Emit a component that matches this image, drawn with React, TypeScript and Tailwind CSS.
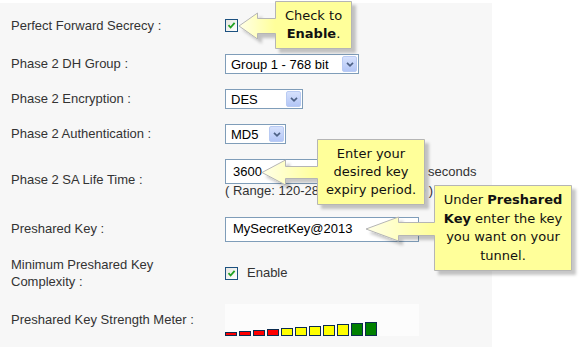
import type { ReactNode } from 'react'

const label = "font-['Liberation_Sans',Arial,sans-serif] text-[13px] text-[#333]"

const bars = [
  { h: 4, c: 'bg-[#ff0000]' },
  { h: 5, c: 'bg-[#ff0000]' },
  { h: 6, c: 'bg-[#ff0000]' },
  { h: 7, c: 'bg-[#ff0000]' },
  { h: 8, c: 'bg-[#ffff00]' },
  { h: 9, c: 'bg-[#ffff00]' },
  { h: 10, c: 'bg-[#ffff00]' },
  { h: 11, c: 'bg-[#ffff00]' },
  { h: 12, c: 'bg-[#ffff00]' },
  { h: 13, c: 'bg-[#008000]' },
  { h: 14, c: 'bg-[#008000]' },
]

function Row({ title, className, children }: { title: ReactNode; className: string; children: ReactNode }) {
  return (
    <div className={`flex items-center ${className}`}>
      <div className={`w-[225px] shrink-0 pl-[11px] ${label}`}>{title}</div>
      <div className="flex-1">{children}</div>
    </div>
  )
}

function Checkbox() {
  return (
    <span className="flex h-[13px] w-[13px] items-center justify-center border border-[#1c5180] bg-gradient-to-br from-[#e6e6e0] to-white">
      <svg width="9" height="9" viewBox="0 0 9 9">
        <path d="M1.5 4.2 L3.6 6.5 L7.6 1.8" stroke="#21a121" strokeWidth="1.8" fill="none" />
      </svg>
    </span>
  )
}

function Select({ value, width }: { value: string; width: string }) {
  return (
    <div className={`flex h-[20px] items-center justify-between border border-[#7f9db9] bg-white pl-[5px] pr-px ${width}`}>
      <span className="font-['Liberation_Sans',Arial,sans-serif] text-[13px] leading-none text-black">{value}</span>
      <span className="flex h-[16px] w-[15px] items-center justify-center rounded-[2px] border border-[#b9cbf3] bg-gradient-to-b from-[#d6e1fc] to-[#b3c6f6]">
        <svg width="8" height="5" viewBox="0 0 8 5">
          <path d="M1 0.8 L4 3.8 L7 0.8" stroke="#4d6185" strokeWidth="1.7" fill="none" />
        </svg>
      </span>
    </div>
  )
}

function TextBox({ value }: { value: string }) {
  return (
    <div className="flex h-[25px] w-[194px] items-center border border-[#7f9db9] bg-white pl-[7px] font-['Liberation_Sans',Arial,sans-serif] text-[13px] text-black">
      {value}
    </div>
  )
}

const tip = "absolute flex items-center justify-center text-center font-['DejaVu_Sans',Verdana,sans-serif] text-[13px] text-[#111]"

export default function App() {
  return (
    <div className="relative h-[347px] w-[580px] overflow-hidden bg-white">
      <div className="mt-[3px] h-[344px] w-[492px] bg-[#f7f7f7]">
        <Row title="Perfect Forward Secrecy :" className="h-[45px]">
          <Checkbox />
        </Row>
        <Row title="Phase 2 DH Group :" className="h-[32px]">
          <Select value="Group 1 - 768 bit" width="w-[134px]" />
        </Row>
        <Row title="Phase 2 Encryption :" className="h-[38px]">
          <Select value="DES" width="w-[78px]" />
        </Row>
        <Row title="Phase 2 Authentication :" className="h-[32px]">
          <Select value="MD5" width="w-[61px]" />
        </Row>
        <Row title={<span className="block pt-[3px]">Phase 2 SA Life Time :</span>} className="h-[56px]">
          <div className="flex items-center gap-[9px]">
            <TextBox value="3600" />
            <span className={label}>seconds</span>
          </div>
          <div className={`${label} leading-[13px]`}>( Range: 120-28800, Default: 3600 )</div>
        </Row>
        <Row title="Preshared Key :" className="h-[46px]">
          <TextBox value="MySecretKey@2013" />
        </Row>
        <Row
          title={
            <span className="block leading-[17px]">
              Minimum Preshared Key
              <br />
              Complexity :
            </span>
          }
          className="h-[42px]"
        >
          <div className="flex items-center gap-[9px]">
            <Checkbox />
            <span className={label}>Enable</span>
          </div>
        </Row>
        <Row title="Preshared Key Strength Meter :" className="h-[52px]">
          <div className="flex h-[32px] w-[194px] items-end gap-[2px] bg-[#fcfcfc]">
            {bars.map((b, i) => (
              <span key={i} className={`w-[12px] border border-[#0b2b4f] ${b.c}`} style={{ height: b.h }} />
            ))}
          </div>
        </Row>
      </div>

      <svg className="pointer-events-none absolute left-0 top-0" width="580" height="347" viewBox="0 0 580 347">
        <defs>
          <filter id="sh" x="-10%" y="-10%" width="130%" height="140%">
            <feDropShadow dx="4" dy="4" stdDeviation="1.8" floodColor="#000" floodOpacity="0.22" />
          </filter>
          <linearGradient id="g1" gradientUnits="userSpaceOnUse" x1="239" y1="0" x2="275" y2="0">
            <stop offset="0" stopColor="#ffffe8" />
            <stop offset="1" stopColor="#ffff9a" />
          </linearGradient>
          <linearGradient id="g2" gradientUnits="userSpaceOnUse" x1="262" y1="0" x2="317" y2="0">
            <stop offset="0" stopColor="#ffffe8" />
            <stop offset="1" stopColor="#ffff9a" />
          </linearGradient>
          <linearGradient id="g3" gradientUnits="userSpaceOnUse" x1="366" y1="0" x2="434" y2="0">
            <stop offset="0" stopColor="#ffffe8" />
            <stop offset="1" stopColor="#ffff9a" />
          </linearGradient>
        </defs>
        <path
          d="M275.5 1.5 H351.5 V48.5 H275.5 V33.5 H257.5 V39 L239 26 L257.5 13 V18.5 H275.5 Z"
          fill="url(#g1)"
          stroke="#b5b5b5"
          filter="url(#sh)"
        />
        <path
          d="M317.5 139.5 H424.5 V204.5 H317.5 V178.5 H285.5 V185 L262 172.5 L285.5 160 V166.5 H317.5 Z"
          fill="url(#g2)"
          stroke="#b5b5b5"
          filter="url(#sh)"
        />
        <path
          d="M434.5 185.5 H571.5 V270.5 H434.5 V235.5 H398.5 V241 L366 229 L398.5 217 V222.5 H434.5 Z"
          fill="url(#g3)"
          stroke="#b5b5b5"
          filter="url(#sh)"
        />
      </svg>

      <div className={`${tip} left-[275px] top-[1px] h-[48px] w-[77px] leading-[18px]`}>
        <span>
          Check to
          <br />
          <b>Enable</b>.
        </span>
      </div>
      <div className={`${tip} left-[317px] top-[139px] h-[66px] w-[108px] leading-[18px]`}>
        <span>
          Enter your
          <br />
          desired key
          <br />
          expiry period.
        </span>
      </div>
      <div className={`${tip} left-[434px] top-[185px] h-[86px] w-[138px] leading-[18.5px]`}>
        <span>
          Under <b>Preshared</b>
          <br />
          <b>Key</b> enter the key
          <br />
          you want on your
          <br />
          tunnel.
        </span>
      </div>
    </div>
  )
}
